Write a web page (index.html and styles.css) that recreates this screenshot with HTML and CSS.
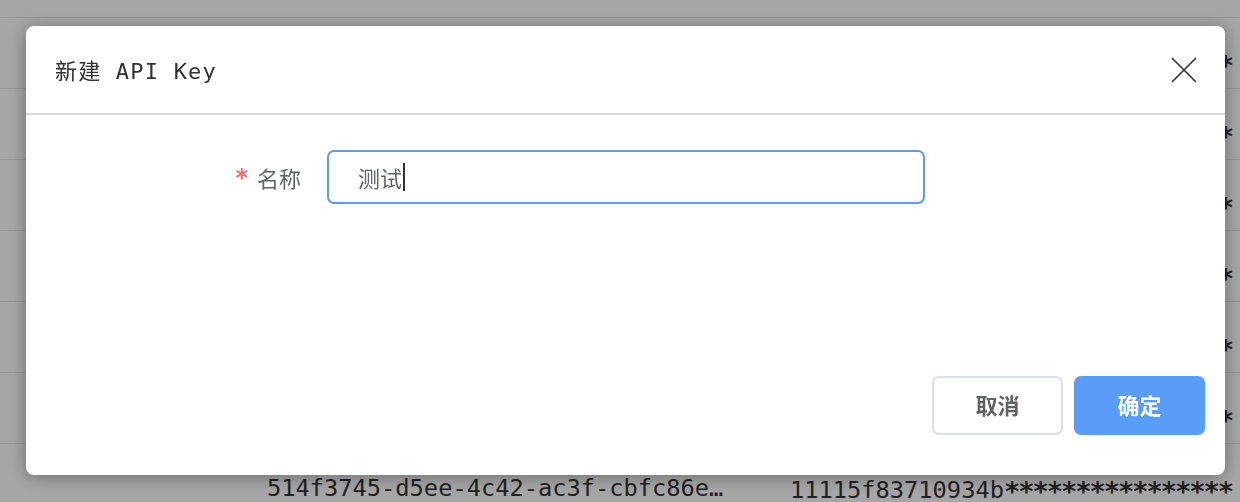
FILE: index.html
```html
<!DOCTYPE html>
<html lang="zh-CN">
<head>
<meta charset="utf-8">
<title>新建 API Key</title>
<link rel="stylesheet" href="styles.css">
</head>
<body>
<div class="table">
  <div class="row"></div>
  <div class="row"><span class="c1">2b9d44e1-77aa-4c10-b3f2-9f8e7d6c…</span><span class="c2">f03b9e21c55a7d0<span class="stars">****************</span></span></div>
  <div class="row"><span class="c1">9e0c3a12-5f6b-4d88-8c1e-1a2b3c4d…</span><span class="c2">6d1a0b8e93f27c4<span class="stars">****************</span></span></div>
  <div class="row"><span class="c1">c4a8f001-2e3d-4b5c-a6d7-e8f9a0b1…</span><span class="c2">0e5f7a2b4c6d8e9<span class="stars">****************</span></span></div>
  <div class="row"><span class="c1">3f6e2d1c-0b9a-4878-9695-a4b3c2d1…</span><span class="c2">b7c6d5e4f3a2b1c<span class="stars">****************</span></span></div>
  <div class="row"><span class="c1">8d7c6b5a-4938-4271-8605-f4e3d2c1…</span><span class="c2">1a2b3c4d5e6f708<span class="stars">****************</span></span></div>
  <div class="row"><span class="c1">e1f2a3b4-c5d6-4e7f-8091-a2b3c4d5…</span><span class="c2">9f8e7d6c5b4a392<span class="stars">****************</span></span></div>
  <div class="row"><span class="c1">514f3745-d5ee-4c42-ac3f-cbfc86e…</span><span class="c2">11115f83710934b<span class="stars">****************</span></span></div>
</div>

<div class="overlay">
  <div class="dialog">
    <div class="dialog-header">
      <span class="dialog-title">新建 API Key</span>
      <button class="close" aria-label="关闭">
        <svg width="26" height="26" viewBox="0 0 26 26"><path d="M1 1 L25 25 M25 1 L1 25" stroke="#303133" stroke-width="1.6" fill="none"/></svg>
      </button>
    </div>
    <div class="dialog-body">
      <div class="form-item">
        <label class="form-label"><span class="req">*</span>名称</label>
        <div class="input is-focus"><span class="input-text">测试</span><span class="caret"></span></div>
      </div>
    </div>
    <div class="dialog-footer">
      <button class="btn btn-default">取消</button>
      <button class="btn btn-primary">确定</button>
    </div>
  </div>
</div>
</body>
</html>
```
FILE: styles.css
```css
html, body {
  margin: 0;
  padding: 0;
  width: 1240px;
  height: 502px;
  overflow: hidden;
  background: #ffffff;
  font-family: "Noto Sans CJK SC", "Noto Sans", sans-serif;
}

.table {
  margin-top: -53px;
}

.row {
  border-bottom: 1px solid #e6e6e6;
  display: flex;
  align-items: center;
  padding-top: 18px;
  box-sizing: border-box;
  height: 71px;
  font-family: "DejaVu Sans Mono", monospace;
  font-size: 23.7px;
  color: #333333;
  white-space: nowrap;
}

.c1 {
  margin-left: 267px;
  width: 523px;
  flex: none;
}

.c2 {
  flex: none;
}

.stars {
  font-weight: 700;
  font-size: 27px;
  letter-spacing: -2px;
  position: relative;
  top: 3px;
}

.overlay {
  position: fixed;
  inset: 0;
  background: rgba(0, 0, 0, 0.35);
}

.dialog {
  position: absolute;
  left: 26px;
  top: 26px;
  width: 1199px;
  height: 449px;
  background: #ffffff;
  border-radius: 8px;
  box-shadow: 0 2px 18px rgba(0, 0, 0, 0.35);
  display: flex;
  flex-direction: column;
}

.dialog-header {
  height: 87px;
  border-bottom: 2px solid #d9d9d9;
  display: flex;
  align-items: center;
  justify-content: space-between;
  padding: 0 28px 0 29px;
  flex: none;
}

.dialog-title {
  font-family: "DejaVu Sans Mono", "Noto Sans CJK SC", monospace;
  font-size: 22px;
  letter-spacing: 1.2px;
  color: #303133;
  padding-bottom: 2px;
}

.close {
  border: none;
  background: none;
  padding: 0;
  width: 26px;
  height: 26px;
  display: flex;
  cursor: pointer;
}

.dialog-body {
  flex: 1;
  padding-top: 35px;
}

.form-item {
  display: flex;
  align-items: center;
  gap: 26px;
}

.form-label {
  width: 275px;
  display: flex;
  align-items: center;
  justify-content: flex-end;
  font-size: 22px;
  color: #606266;
}

.req {
  color: #f56c6c;
  font-family: "DejaVu Sans", sans-serif;
  font-size: 24px;
  font-weight: 700;
  margin-right: 9px;
  position: relative;
  top: 1px;
}

.input {
  width: 598px;
  height: 54px;
  box-sizing: border-box;
  border: 2px solid #5a9cf5;
  border-radius: 7px;
  display: flex;
  align-items: center;
  padding-left: 29px;
  font-size: 22px;
  color: #606266;
}

.caret {
  width: 2px;
  height: 28px;
  background: #303133;
  margin-left: 1px;
}

.dialog-footer {
  display: flex;
  justify-content: flex-end;
  gap: 11px;
  padding: 0 20px 40px 0;
}

.btn {
  width: 131px;
  height: 59px;
  border-radius: 7px;
  font-family: "Noto Sans CJK SC", sans-serif;
  font-size: 22px;
  font-weight: 700;
  line-height: 30px;
  cursor: pointer;
  box-sizing: border-box;
  padding: 0 0 3px;
  text-align: center;
}

.btn-default {
  background: #ffffff;
  border: 2px solid #dcdfe6;
  color: #606266;
}

.btn-primary {
  background: #5a9df8;
  border: 2px solid #5a9df8;
  color: #ffffff;
}
```
